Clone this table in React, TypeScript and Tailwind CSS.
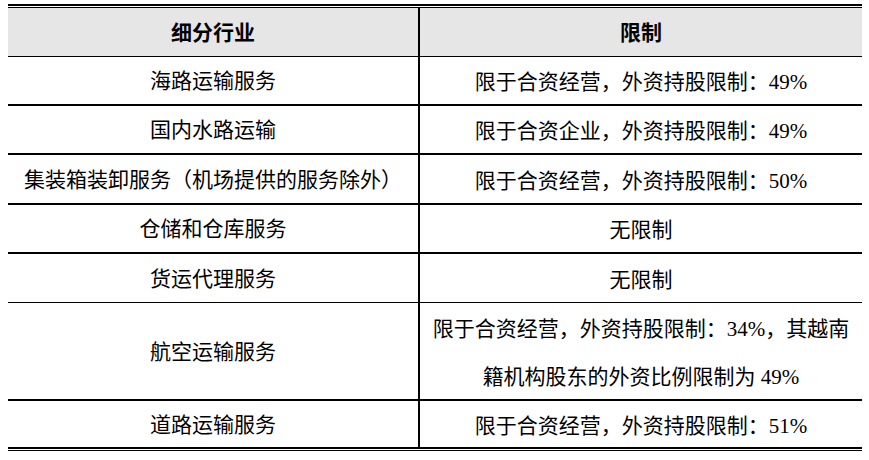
import React from 'react';

type Row = { industry: string; limit: string; h: string; line: string };

const rows: Row[] = [
  { industry: '海路运输服务', limit: '限于合资经营，外资持股限制：49%', h: 'h-[47px]', line: 'border-b-2' },
  { industry: '国内水路运输', limit: '限于合资企业，外资持股限制：49%', h: 'h-[47px]', line: 'border-b-2' },
  { industry: '集装箱装卸服务（机场提供的服务除外）', limit: '限于合资经营，外资持股限制：50%', h: 'h-[48px]', line: 'border-b-2' },
  { industry: '仓储和仓库服务', limit: '无限制', h: 'h-[47px]', line: 'border-b-2' },
  { industry: '货运代理服务', limit: '无限制', h: 'h-[48px]', line: 'border-b' },
  { industry: '航空运输服务', limit: '限于合资经营，外资持股限制：34%，其越南籍机构股东的外资比例限制为 49%', h: 'h-[96px]', line: 'border-b-2' },
  { industry: '道路运输服务', limit: '限于合资经营，外资持股限制：51%', h: 'h-[46px]', line: 'border-b-2' },
];

export default function App() {
  return (
    <div className="w-[869px] h-[460px] bg-white pt-[4px] pl-[8px] font-['Liberation_Serif','Noto_Sans_CJK_SC',serif] text-black">
      <div className="w-[854px]">
        {/* top double rule */}
        <div className="h-[2px] bg-black" />
        <div className="h-[1px]" />
        <div className="h-[1px] bg-black" />

        <div className="grid grid-cols-[412px_442px] bg-[#e6e6e6] border-b border-black h-[49px] font-['Noto_Sans_CJK_SC',sans-serif] font-bold text-[21px]">
          <div className="flex items-center justify-center border-r-2 border-black">细分行业</div>
          <div className="flex items-center justify-center">限制</div>
        </div>

        {rows.map((r) => (
          <div key={r.industry} className={`grid grid-cols-[412px_442px] border-black ${r.line}`}>
            <div className={`flex items-center justify-center border-r-2 border-black text-[21px] pt-[3px] ${r.h}`}>
              {r.industry}
            </div>
            <div className={`flex items-center justify-center px-[10px] text-center text-[21px] leading-[48px] pt-[3px] ${r.h}`}>
              {r.limit}
            </div>
          </div>
        ))}

        <div className="h-[1px]" />
        <div className="h-[1px] bg-black" />
      </div>
    </div>
  );
}
